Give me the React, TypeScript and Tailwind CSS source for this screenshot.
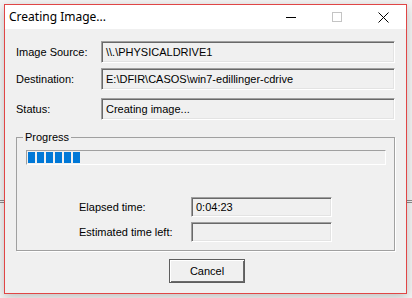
export default function App() {
  const blocks = [0, 1, 2, 3, 4, 5];
  const sunken =
    "border border-t-[#a0a0a0] border-l-[#a0a0a0] border-r-white border-b-white shadow-[inset_1px_1px_0_#696969,inset_-1px_-1px_0_#e3e3e3]";

  return (
    <div
      className="relative w-[412px] h-[298px] overflow-hidden bg-[#f4f4f4] pl-[4px] pt-[4px] text-black"
      style={{ fontFamily: '"Liberation Sans", Arial, sans-serif' }}
    >
      {/* edges of a window behind this dialog */}
      <div className="absolute left-0 right-0 top-[200px] h-[3px] border-y border-[#8c8c8c]" />

      <div className="relative z-10 flex flex-col w-[403px] h-[290px] border border-[#e04646] bg-[#f0f0f0] shadow-[0_3px_10px_rgba(0,0,0,0.22)]">
        {/* title bar */}
        <div className="flex items-center h-[24px] bg-white">
          <span
            className="pl-[4px] text-[12px] leading-none"
            style={{ fontFamily: '"Noto Sans", "Open Sans", sans-serif' }}
          >
            Creating Image...
          </span>
          <div className="ml-auto flex h-full">
            <div className="flex w-[46px] items-center justify-center">
              <svg width="10" height="10" viewBox="0 0 10 10">
                <path d="M0 5.5h10" stroke="#000" strokeWidth="1" />
              </svg>
            </div>
            <div className="flex w-[46px] items-center justify-center">
              <svg width="10" height="10" viewBox="0 0 10 10">
                <rect x="0.5" y="0.5" width="9" height="9" fill="none" stroke="#c4c4c4" />
              </svg>
            </div>
            <div className="flex w-[46px] items-center justify-center">
              <svg width="11" height="11" viewBox="0 0 11 11">
                <path d="M0.5 0.5l10 10M10.5 0.5l-10 10" stroke="#000" strokeWidth="1" />
              </svg>
            </div>
          </div>
        </div>

        {/* body */}
        <div className="flex flex-col pt-[12px] pl-[11px] text-[11px]">
          <div className="flex items-center h-[22px]">
            <span className="w-[85px]">Image Source:</span>
            <div className={`flex items-center w-[294px] h-[22px] pl-[4px] ${sunken}`}>\\.\PHYSICALDRIVE1</div>
          </div>
          <div className="flex items-center h-[22px] mt-[5px]">
            <span className="w-[85px]">Destination:</span>
            <div className={`flex items-center w-[294px] h-[22px] pl-[4px] ${sunken}`}>
              E:\DFIR\CASOS\win7-edillinger-cdrive
            </div>
          </div>
          <div className="flex items-center h-[22px] mt-[8px]">
            <span className="w-[85px]">Status:</span>
            <div className={`flex items-center w-[294px] h-[22px] pl-[4px] ${sunken}`}>Creating image...</div>
          </div>

          {/* progress group */}
          <div className="relative mt-[17px] w-[379px] h-[114px] border border-[#a0a0a0] shadow-[1px_1px_0_#fff] pl-[9px] pt-[12px]">
            <span className="absolute left-[6px] top-[-8px] bg-[#f0f0f0] px-[2px] leading-[14px]">Progress</span>
            <div className="flex gap-[2px] w-[360px] h-[15px] p-[1px] border border-t-[#a0a0a0] border-l-[#a0a0a0] border-r-white border-b-white">
              {blocks.map((b) => (
                <div key={b} className="w-[7px] h-full bg-[#0078d7]" />
              ))}
            </div>
            <div className="flex items-center mt-[32px] h-[20px]">
              <span className="ml-[53px] w-[112px]">Elapsed time:</span>
              <div className={`flex items-center w-[141px] h-[20px] pl-[4px] ${sunken}`}>0:04:23</div>
            </div>
            <div className="flex items-center mt-[5px] h-[20px]">
              <span className="ml-[53px] w-[112px]">Estimated time left:</span>
              <div className={`w-[141px] h-[20px] ${sunken}`} />
            </div>
          </div>

          <button className="mt-[8px] ml-[153px] w-[76px] h-[24px] border border-[#5e5e5e] bg-[#f0f0f0] shadow-[inset_1px_1px_0_#fff,inset_-1px_-1px_0_#6a6a6a] text-[11px]">
            Cancel
          </button>
        </div>
      </div>
    </div>
  );
}
